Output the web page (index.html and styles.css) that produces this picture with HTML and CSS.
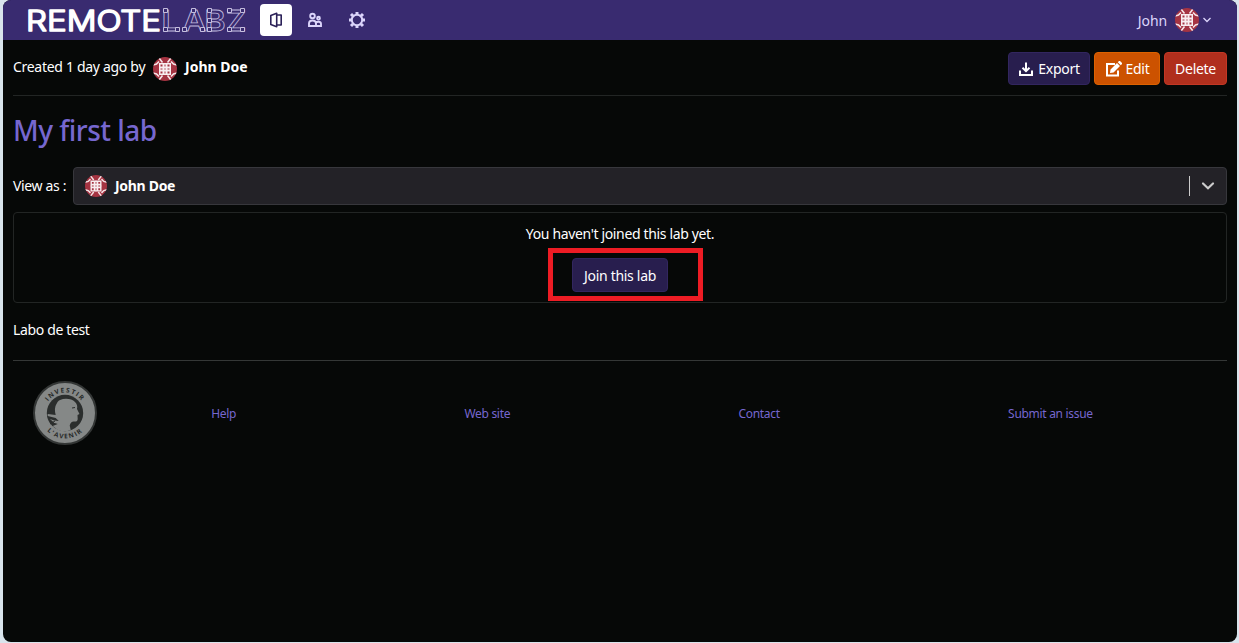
FILE: index.html
```html
<!DOCTYPE html>
<html lang="en">
<head>
<meta charset="utf-8">
<title>RemoteLabz - My first lab</title>
<link rel="stylesheet" href="styles.css">
</head>
<body>
<svg class="defs" aria-hidden="true">
  <symbol id="avatar" viewBox="0 0 24 24">
    <clipPath id="round"><circle cx="12" cy="12" r="12"/></clipPath>
    <g clip-path="url(#round)">
      <rect width="24" height="24" fill="#a53442"/>
      <path fill="#f8eef0" d="M6 6h12v12H6z"/>
      <path stroke="#f5e4e7" stroke-width="1.600" fill="none" d="M6 1l3.500 4.500M18 1l-3.500 4.500M6 23l3.500-4.500M18 23l-3.500-4.500M0 8l3.500-1L6 4.500M0 16l3.500 1L6 19.500M24 8l-3.500-1L18 4.500M24 16l-3.500 1L18 19.500"/>
      <path fill="#a53442" d="M7.500 7.500h2v2h-2zM14.500 7.500h2v2h-2zM7.500 14.500h2v2h-2zM14.500 14.500h2v2h-2z"/>
      <path fill="#b9606b" d="M11 7.500h2v2h-2zM7.500 11h2v2h-2zM11 11h2v2h-2zM14.500 11h2v2h-2zM11 14.500h2v2h-2z"/>
      <path stroke="#f8eef0" stroke-width=".7" d="M12 6v12M6 12h12"/>
    </g>
  </symbol>
</svg>
<div class="window">
  <nav class="navbar">
    <svg class="logo" width="222" height="40" viewBox="0 -5 222 40">
      <text class="logo-solid" x="0" y="25.500" textLength="135" lengthAdjust="spacingAndGlyphs">REMOTE</text>
      <g class="logo-outline">
        <text transform="translate(135.500 25.500) scale(1.150 1)">L</text>
        <text transform="translate(156.500 25.500) scale(1.120 1)">A</text>
        <text transform="translate(178.500 25.500) scale(1.100 1)">B</text>
        <text transform="translate(200 25.500) scale(1.070 1)">Z</text>
      </g>
      <path class="logo-nodes" d="M137.500 3.500h4v4h-4zM137.500 22.500h4v4h-4zM149.500 22.500h4v4h-4zM165.500 3.500h4v4h-4zM156.500 22.500h4v4h-4zM174.500 22.500h4v4h-4zM181.500 3.500h4v4h-4zM181.500 13.500h4v4h-4zM181.500 22.500h4v4h-4zM201.500 3.500h4v4h-4zM214.500 3.500h4v4h-4zM201.500 22.500h4v4h-4zM214.500 22.500h4v4h-4z"/>
    </svg>
    <span class="nav-item active">
      <svg width="16" height="16" viewBox="0 0 16 16" fill="none" stroke="#2b2158" stroke-width="1.600"><path d="M8.700 1.300v13.400L2.800 12.500V3.500zM8.700 3h4.500v10H8.700" stroke-linejoin="round"/></svg>
    </span>
    <span class="nav-item">
      <svg width="16" height="16" viewBox="0 0 16 16" fill="none" stroke="#dcd5fb" stroke-width="1.900"><circle cx="5.500" cy="4" r="2.300"/><circle cx="11.500" cy="6.200" r="1.400"/><path d="M2 14V11.500q0-3 3.500-3t3.500 3V14zM9 14h5v-2q0-2.300-2.600-2.300-1.600 0-2.400.8"/></svg>
    </span>
    <span class="nav-item gear">
      <svg width="16" height="16" viewBox="0 0 16 16" fill="none" stroke="#dcd5fb"><circle cx="8" cy="8" r="5.200" stroke-width="2"/><path stroke-width="3" d="M8 0v2.500M8 13.500V16M0 8h2.500M13.500 8H16M2 2l2 2M12 12l2 2M2 14l2-2M12 4l2-2"/></svg>
    </span>
    <div class="user">
      <span>John</span>
      <svg class="avatar"><use href="#avatar"/></svg>
      <svg width="8" height="6" viewBox="0 0 8 6" fill="none" stroke="#dcd5fb" stroke-width="1.300"><path d="M.5 1 4 4.500 7.500 1"/></svg>
    </div>
  </nav>
  <main class="content">
    <header class="lab-header">
      <div class="author"><span class="created">Created 1 day ago by</span><svg class="avatar"><use href="#avatar"/></svg><b>John Doe</b></div>
      <div class="actions">
        <button class="btn export"><svg width="16" height="16" viewBox="0 0 16 16" fill="none" stroke="#fff" stroke-width="2"><path d="M2 9.500V14h12V9.500M8 1.500v8M4.500 6.800 8 10.200l3.500-3.400"/></svg>Export</button>
        <button class="btn edit"><svg width="17" height="16" viewBox="0 0 17 16"><path d="M10 3H2v11.500h11V9.500" fill="none" stroke="#fff" stroke-width="2"/><path fill="#fff" d="M5.500 8.500 12 2l3 3-6.500 6.500-3.500.5zM12.800 1.200 14 0h1l2 2v1l-1.200 1.200z"/></svg>Edit</button>
        <button class="btn delete">Delete</button>
      </div>
    </header>
    <h1>My first lab</h1>
    <div class="view-as">
      <label>View as :</label>
      <div class="select">
        <svg class="avatar small"><use href="#avatar"/></svg><b>John Doe</b>
        <span class="separator"></span>
        <svg class="chevron" width="14" height="10" viewBox="0 0 14 10" fill="none" stroke="#ccc" stroke-width="2.200" stroke-linecap="round"><path d="M2 2.500 7 7.200l5-4.700"/></svg>
      </div>
    </div>
    <section class="card">
      <p>You haven't joined this lab yet.</p>
      <div class="join-wrap"><button class="btn join">Join this lab</button><span class="highlight"></span></div>
    </section>
    <p class="description">Labo de test</p>
    <footer class="footer">
      <svg class="seal" width="64" height="64" viewBox="0 0 64 64">
        <circle cx="32" cy="32" r="31" fill="#858887" stroke="#333635" stroke-width="2"/>
        <circle cx="32" cy="32" r="18.200" fill="#2b2e2d"/>
        <path fill="#858887" d="M24 22q1-3 6-4 8-1 12 3 3 3 2 7l2.500 5-2 1 .2 4q0 3-4 2.500-3 0-4 4l1 4.500q-6 2.500-13 0l-5-4 5-2q-2-1-4-1l-4-4q5 2 9 2l-3-3-8-2v-2l8 1q-2-7 1.300-12z"/>
        <path stroke="#2b2e2d" fill="none" d="M39 27l3-.5M15 37l7 6M17 43l5-3"/>
        <path id="arc-top" fill="none" d="M11.500 32a20.500 20.500 0 0 1 41 0"/>
        <path id="arc-bottom" fill="none" d="M6.500 32a25.500 25.500 0 0 0 51 0"/>
        <text class="seal-text"><textPath href="#arc-top" startOffset="50%" text-anchor="middle">INVESTIR</textPath></text>
        <text class="seal-text"><textPath href="#arc-bottom" startOffset="50%" text-anchor="middle">L'AVENIR</textPath></text>
      </svg>
      <div class="links"><a>Help</a><a>Web site</a><a>Contact</a><a>Submit an issue</a></div>
    </footer>
  </main>
</div>
</body>
</html>
```
FILE: styles.css
```css
* { box-sizing: border-box; }
body {
  margin: 0;
  height: 643px;
  padding: 0 2px 1px 3px;
  background: #d9e4ec;
  color: #fff;
  font: 14px/21px "Noto Sans", "Open Sans", sans-serif;
  letter-spacing: -0.35px;
}
p, h1 { margin: 0; }
svg { display: block; flex: none; }
b { font-weight: 700; letter-spacing: -0.3px; }
.defs { position: absolute; width: 0; height: 0; }
.window { height: 642px; border-radius: 8px; overflow: hidden; background: #060807; }
.navbar { height: 40px; display: flex; align-items: center; background: #392b70; padding: 0 26px 0 23px; color: #dcd5fb; }
.logo-solid { font: 300 29px Inter, sans-serif; letter-spacing: 0; fill: #fff; stroke: #fff; stroke-width: 1.6px; stroke-linejoin: round; }
.logo-outline { font: 600 29px Inter, sans-serif; letter-spacing: 0; fill: none; stroke: #bdb6dc; stroke-width: .8px; }
.logo-nodes { fill: #392b70; stroke: #d2cce8; stroke-width: .9px; }
.nav-item { width: 32px; height: 32px; margin-right: 7px; display: flex; align-items: center; justify-content: center; border-radius: 4px; }
.logo + .nav-item { margin-left: 12px; }
.nav-item.gear { margin-left: 3px; }
.active { background: #fff; }
.user { margin-left: auto; display: flex; align-items: center; gap: 4px; }
.user span { margin: 1px 4px 0 0; letter-spacing: -.1px; }
.avatar { width: 24px; height: 24px; }
.avatar.small { width: 22px; height: 22px; }
.content { padding: 12px 10px; }
.lab-header { height: 44px; display: flex; justify-content: space-between; border-bottom: 1px solid #222524; }
.author { display: flex; align-items: center; height: 33px; }
.author .avatar { margin: 1px 8px 0 0; }
.author .created { width: 140px; white-space: nowrap; letter-spacing: -.3px; }
.author span, .author b { margin-bottom: 4px; }
.author b { letter-spacing: 0; }
.actions { display: flex; gap: 4px; }
.btn { height: 33px; padding: 0 10px; display: flex; align-items: center; justify-content: center; gap: 4px; border: 1px solid; border-radius: 4px; color: #fff; font: inherit; letter-spacing: -.3px; }
.export { width: 82px; background: #281e4e; border-color: #32265f; }
.edit { width: 66px; background: #cc5200; border-color: #dc6200; }
.delete { width: 63px; background: #b02f1d; border-color: #c33724; }
h1 { height: 71px; padding-top: 13px; font-size: 28px; line-height: 42px; font-weight: 500; letter-spacing: -.5px; color: #7667cf; }
.view-as { height: 38px; display: flex; align-items: center; }
.view-as label { width: 60px; white-space: nowrap; margin-bottom: 1px; }
.select { flex: 1; height: 38px; display: flex; align-items: center; gap: 8px; padding: 0 11px; border: 1px solid #37373c; border-radius: 4px; background: #232227; }
.select b { margin-bottom: 1px; }
.separator { width: 1px; height: 20px; margin-left: auto; background: #ccc; }
.chevron { margin-left: 3px; }
.card { height: 91px; margin-top: 7px; padding-top: 10px; border: 1px solid #222524; border-radius: 4px; text-align: center; }
.join-wrap { width: 96px; height: 34px; margin: 14px auto 0; position: relative; }
.join { width: 96px; height: 34px; padding: 0; background: #281e4e; border-color: #32265f; }
.highlight { position: absolute; left: -24px; top: -10px; width: 155px; height: 53px; border: 5px solid #ed1c24; }
.description { height: 57px; padding-top: 16px; }
.footer { height: 105px; padding: 0 20px; display: flex; align-items: center; border-top: 1px solid #343736; }
.seal-text { font: 700 6.5px "Open Sans", sans-serif; letter-spacing: 1.3px; fill: #272a29; }
.links { flex: 1; display: flex; justify-content: space-around; font-size: 12px; color: #7667cf; letter-spacing: -0.3px; }
```
